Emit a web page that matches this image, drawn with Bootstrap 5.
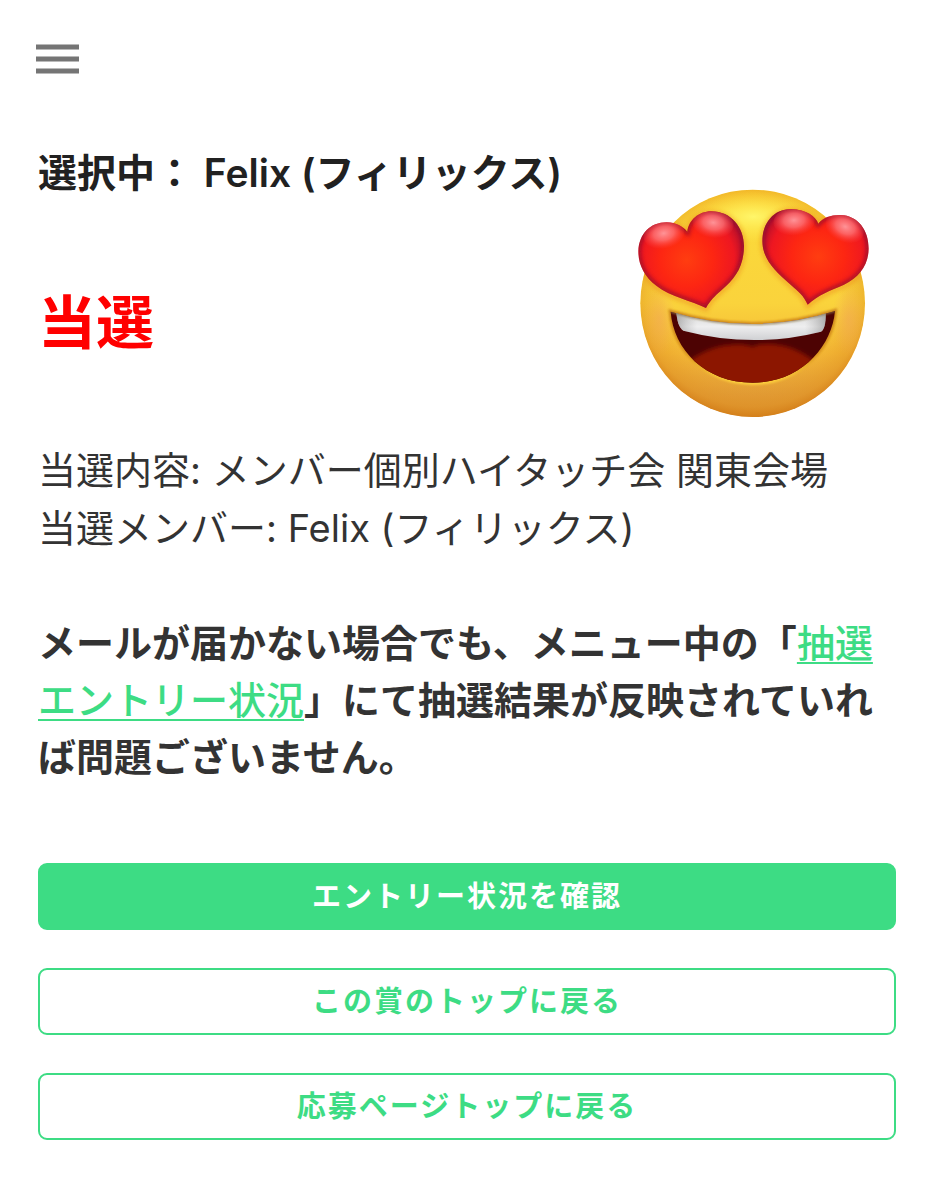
<!DOCTYPE html>
<html lang="ja">
<head>
<meta charset="utf-8">
<meta name="viewport" content="width=device-width, initial-scale=1">
<title>抽選結果</title>
<link href="https://cdn.jsdelivr.net/npm/bootstrap@5.3.0/dist/css/bootstrap.min.css" rel="stylesheet">
<style>
  :root { --brand: #3ddc84; --ink: #333; }
  body { font-family: Inter, "Noto Sans CJK JP", sans-serif; font-size: 38px; line-height: 58px; color: var(--ink); background: #fff; }
  .page-pad { padding: 0 38px 60px; }
  .top-bar { padding: 44px 36px 0; }
  .menu-btn { width: 43px; height: 30px; }
  .menu-btn svg { width: 43px; height: 30px; }
  .result-head { padding-top: 70px; margin-bottom: 18px; }
  .pick-title { font-size: 39px; line-height: 58px; font-weight: 600; color: #212121; }
  .win-title { font-size: 58px; line-height: 86px; font-weight: 700; color: #f00; margin-top: 78px; }
  .face { width: 250px; height: 240px; margin: 39px 16px 0 0; }
  .notice { line-height: 57px; margin: 58px 0 77px; }
  .notice a { color: var(--brand); font-weight: 500; text-decoration-thickness: 2px; text-underline-offset: 5px; }
  .actions { gap: 38px; }
  .btn-entry {
    --bs-btn-color: var(--brand); --bs-btn-border-color: var(--brand); --bs-btn-bg: #fff;
    --bs-btn-hover-color: #fff; --bs-btn-hover-bg: var(--brand); --bs-btn-hover-border-color: var(--brand);
    --bs-btn-border-width: 2px; --bs-btn-border-radius: 9px;
    --bs-btn-font-size: 29px; --bs-btn-font-weight: 600; --bs-btn-line-height: 43px; --bs-btn-padding-y: 10px;
    letter-spacing: 2px;
  }
  .btn-entry.is-main { --bs-btn-color: #fff; --bs-btn-bg: var(--brand); }
</style>
</head>
<body>
<header class="top-bar d-flex">
  <button type="button" class="menu-btn btn p-0 border-0 d-flex" aria-label="メニュー">
    <svg viewBox="0 0 43 30" fill="#757575" aria-hidden="true"><path d="M0 .6h43v4.8H0zM0 12.6h43v4.8H0zM0 24.6h43v4.8H0z"/></svg>
  </button>
</header>
<main class="page-pad">
  <section class="result-head d-flex justify-content-between align-items-start">
    <div>
      <h1 class="pick-title mb-0">選択中： Felix (フィリックス)</h1>
      <h2 class="win-title mb-0">当選</h2>
    </div>
    <svg class="face flex-shrink-0" viewBox="30 9 750 720" role="img" aria-label="目がハートの笑顔">
      <defs>
        <linearGradient id="skin" gradientUnits="userSpaceOnUse" x1="0" y1="29" x2="0" y2="711">
          <stop offset="0" stop-color="#fbcb2e"/><stop offset=".15" stop-color="#fbd93a"/><stop offset=".5" stop-color="#fad33c"/><stop offset=".72" stop-color="#f3b736"/><stop offset=".9" stop-color="#e19c38"/><stop offset="1" stop-color="#d98f30"/>
        </linearGradient>
        <radialGradient id="rim" gradientUnits="userSpaceOnUse" cx="398" cy="345" r="372">
          <stop offset=".7" stop-color="#e89a24" stop-opacity="0"/><stop offset=".9" stop-color="#e0901f" stop-opacity=".45"/><stop offset="1" stop-color="#cf7510" stop-opacity=".8"/>
        </radialGradient>
        <radialGradient id="brow"><stop offset="0" stop-color="#fff66a"/><stop offset="1" stop-color="#ffe94a" stop-opacity="0"/></radialGradient>
        <radialGradient id="cheek"><stop offset="0" stop-color="#f3aa55" stop-opacity=".6"/><stop offset="1" stop-color="#f3aa55" stop-opacity="0"/></radialGradient>
        <radialGradient id="heartL" gradientUnits="userSpaceOnUse" cx="200" cy="240" r="190">
          <stop offset="0" stop-color="#ff3d10"/><stop offset=".42" stop-color="#fd2612"/><stop offset=".75" stop-color="#ee1721"/><stop offset="1" stop-color="#a80f30"/>
        </radialGradient>
        <radialGradient id="heartR" gradientUnits="userSpaceOnUse" cx="595" cy="230" r="190">
          <stop offset="0" stop-color="#ff3d10"/><stop offset=".42" stop-color="#fd2612"/><stop offset=".75" stop-color="#ee1721"/><stop offset="1" stop-color="#a80f30"/>
        </radialGradient>
        <radialGradient id="gloss" cx=".5" cy=".45" r=".55"><stop offset="0" stop-color="#ff9a9e" stop-opacity=".95"/><stop offset=".45" stop-color="#ff7f82" stop-opacity=".7"/><stop offset="1" stop-color="#ff4a48" stop-opacity="0"/></radialGradient>
        <linearGradient id="teeth" x1="0" y1="0" x2="0" y2="1"><stop offset="0" stop-color="#d5d5d3"/><stop offset=".55" stop-color="#eeeeef"/><stop offset="1" stop-color="#cfd0d3"/></linearGradient>
        <linearGradient id="teethEdge"><stop offset="0" stop-color="#777" stop-opacity=".5"/><stop offset=".14" stop-color="#999" stop-opacity="0"/><stop offset=".86" stop-color="#999" stop-opacity="0"/><stop offset="1" stop-color="#777" stop-opacity=".5"/></linearGradient>
        <linearGradient id="lip" x1="0" y1="0" x2="0" y2="1"><stop offset="0" stop-color="#cf8a1c"/><stop offset=".6" stop-color="#d9921d"/><stop offset="1" stop-color="#ffd23d"/></linearGradient>
        <filter id="soft3" x="-20%" y="-20%" width="140%" height="140%"><feGaussianBlur stdDeviation="3"/></filter>
        <filter id="soft7" x="-20%" y="-20%" width="140%" height="140%"><feGaussianBlur stdDeviation="7"/></filter>
        <path id="hl" d="M258 384C215 362 150 350 110 318C70 288 55 250 55 214C57 160 92 127 140 127C168 127 189 140 202 155C206 121 236 94 274 94C334 94 372 143 372 198C371 262 345 295 305 330C284 348 270 362 258 384Z"/>
        <path id="hr" d="M563 374C552 348 535 334 512 314C462 272 428 236 427 184C427 130 460 87 514 87C558 88 588 110 595 131C610 112 635 104 662 105C714 107 746 150 746 206C745 256 718 292 672 314C630 332 596 344 563 374Z"/>
        <path id="mouth" d="M152 395Q400 470 645 393C636 500 542 608 398 608C256 608 160 508 152 395Z"/>
        <clipPath id="inL"><use href="#hl"/></clipPath><clipPath id="inR"><use href="#hr"/></clipPath><clipPath id="inM"><use href="#mouth"/></clipPath>
        <clipPath id="inF"><ellipse cx="398" cy="370" rx="337" ry="341"/></clipPath>
      </defs>
      <ellipse cx="398" cy="370" rx="337" ry="341" fill="url(#skin)"/>
      <g clip-path="url(#inF)">
        <ellipse cx="398" cy="370" rx="337" ry="341" fill="url(#rim)"/>
        <ellipse cx="400" cy="110" rx="190" ry="78" fill="url(#brow)"/>
        <ellipse cx="118" cy="420" rx="50" ry="110" fill="url(#cheek)"/>
        <ellipse cx="686" cy="420" rx="50" ry="110" fill="url(#cheek)"/>
        <g filter="url(#soft7)" fill="none" stroke="#ec8f1c" stroke-width="12" opacity=".6"><use href="#hl" y="4"/><use href="#hr" y="4"/></g>
      </g>
      <use href="#mouth" fill="none" stroke="url(#lip)" stroke-width="12" filter="url(#soft3)"/>
      <use href="#mouth" fill="#4d0303"/>
      <g clip-path="url(#inM)">
        <path d="M205 545Q270 495 350 493Q380 492 397 501Q414 490 450 491Q525 496 585 545L540 640H240Z" fill="#8c1300" filter="url(#soft7)"/>
        <path d="M168 390H617C618 425 615 446 603 455Q398 507 190 452C175 442 171 420 168 390Z" fill="url(#teeth)"/>
        <path d="M168 390H617C618 425 615 446 603 455Q398 507 190 452C175 442 171 420 168 390Z" fill="url(#teethEdge)"/>
        <path d="M152 395Q400 470 645 393" fill="none" stroke="#8c7a50" stroke-width="5" filter="url(#soft3)"/>
      </g>
      <use href="#hl" fill="url(#heartL)"/>
      <g clip-path="url(#inL)">
        <use href="#hl" fill="none" stroke="#85092f" stroke-width="14" opacity=".75" filter="url(#soft7)"/>
        <ellipse cx="132" cy="164" rx="62" ry="42" fill="url(#gloss)" transform="rotate(-12 132 164)"/>
        <ellipse cx="279" cy="132" rx="62" ry="42" fill="url(#gloss)" transform="rotate(8 279 132)"/>
      </g>
      <use href="#hr" fill="url(#heartR)"/>
      <g clip-path="url(#inR)">
        <use href="#hr" fill="none" stroke="#85092f" stroke-width="14" opacity=".75" filter="url(#soft7)"/>
        <ellipse cx="522" cy="125" rx="62" ry="42" fill="url(#gloss)" transform="rotate(-4 522 125)"/>
        <ellipse cx="674" cy="144" rx="60" ry="42" fill="url(#gloss)" transform="rotate(24 674 144)"/>
      </g>
    </svg>
  </section>
  <p class="mb-0">当選内容: メンバー個別ハイタッチ会 関東会場<br>当選メンバー: Felix (フィリックス)</p>
  <p class="notice fw-bold">メールが届かない場合でも、メニュー中の「<a href="#entry">抽選エントリー状況</a>」にて抽選結果が反映されていれば問題ございません。</p>
  <div class="actions d-grid">
    <button type="button" class="btn btn-entry is-main">エントリー状況を確認</button>
    <button type="button" class="btn btn-entry">この賞のトップに戻る</button>
    <button type="button" class="btn btn-entry">応募ページトップに戻る</button>
  </div>
</main>
<script src="https://cdn.jsdelivr.net/npm/bootstrap@5.3.0/dist/js/bootstrap.bundle.min.js"></script>
</body>
</html>
